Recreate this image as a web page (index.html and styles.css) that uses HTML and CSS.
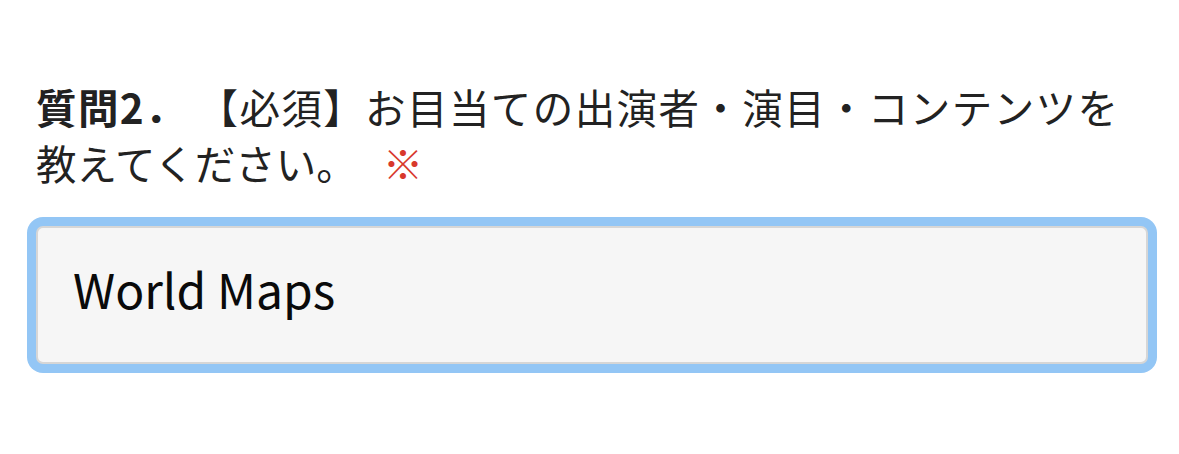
FILE: index.html
```html
<!DOCTYPE html>
<html lang="ja">
<head>
<meta charset="utf-8">
<title>質問2</title>
<link rel="stylesheet" href="styles.css">
</head>
<body>
<div class="form">
  <label class="question" for="q2"><span class="qnum">質問2．</span> 【必須】お目当ての出演者・演目・コンテンツを教えてください。<span class="req">※</span></label>
  <div class="ring">
    <input id="q2" class="field" type="text" value="World Maps">
  </div>
</div>
</body>
</html>
```
FILE: styles.css
```css
html, body {
  margin: 0;
  padding: 0;
  background: #ffffff;
}
.form {
  width: 1130px;
  padding: 79px 0 40px 27px;
  display: flex;
  flex-direction: column;
  gap: 26px;
  font-family: "Noto Sans CJK JP", "Noto Sans", sans-serif;
}
.question {
  display: block;
  font-size: 40.5px;
  line-height: 56px;
  color: #222222;
  text-align: justify;
  padding: 0 39px 0 9px;
}
.qnum {
  font-weight: bold;
}
.req {
  color: #d8392c;
  margin-left: 26px;
}
.ring {
  padding: 9px;
  background: #93c6f5;
  border-radius: 16px;
}
.field {
  display: block;
  box-sizing: border-box;
  width: 100%;
  height: 138px;
  margin: 0;
  padding: 0 0 14px 35px;
  border: 2px solid #d6d6d6;
  border-radius: 7px;
  background: #f6f6f6;
  outline: none;
  font-family: "Noto Sans CJK JP", "Noto Sans", sans-serif;
  font-size: 48px;
  color: #0a0a0a;
}
```
